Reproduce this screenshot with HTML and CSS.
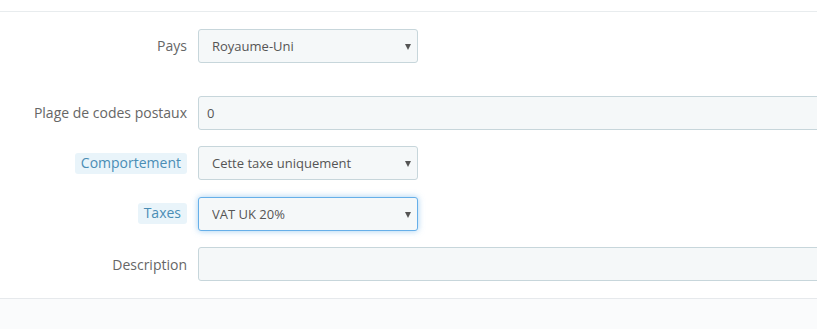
FILE: index.html
```html
<!DOCTYPE html>
<html lang="fr">
<head>
  <meta charset="UTF-8">
  <meta name="viewport" content="width=device-width, initial-scale=1.0">
  <title>Règle de taxe</title>
  <link rel="stylesheet" href="styles.css">
</head>
<body>
  <div class="panel-top"></div>
  <form class="tax-form">
    <div class="form-row">
      <label class="control-label" for="country">Pays</label>
      <div class="select-wrap">
        <select id="country" class="form-control">
          <option>Royaume-Uni</option>
        </select>
      </div>
    </div>
    <div class="form-row hidden-row"></div>
    <div class="form-row">
      <label class="control-label" for="zipcode">Plage de codes postaux</label>
      <div class="input-clip">
        <input id="zipcode" class="form-control wide" type="text" value="0">
      </div>
    </div>
    <div class="form-row">
      <label class="control-label" for="behavior"><span class="label-tooltip">Comportement</span></label>
      <div class="select-wrap">
        <select id="behavior" class="form-control">
          <option>Cette taxe uniquement</option>
        </select>
      </div>
    </div>
    <div class="form-row">
      <label class="control-label" for="tax"><span class="label-tooltip">Taxes</span></label>
      <div class="select-wrap">
        <select id="tax" class="form-control focused">
          <option>VAT UK 20%</option>
        </select>
      </div>
    </div>
    <div class="form-row">
      <label class="control-label" for="description">Description</label>
      <div class="input-clip">
        <input id="description" class="form-control wide" type="text" value="">
      </div>
    </div>
  </form>
  <div class="panel-footer"></div>
</body>
</html>
```

FILE: styles.css
```css
body {
  margin: 0;
  background-color: #fff;
  font-family: 'Open Sans', sans-serif;
  font-size: 14px;
  color: #555;
  overflow: hidden;
}
.panel-top {
  height: 11px;
  border-bottom: 1px solid #e8ecee;
}
.tax-form {
  display: flex;
  flex-direction: column;
  gap: 16.5px;
  padding: 16.5px 0 16.5px 0;
}
.form-row {
  display: grid;
  grid-template-columns: 187px 1fr;
  column-gap: 11px;
  align-items: center;
  height: 34px;
}
.form-row.hidden-row {
  height: 0;
}
.control-label {
  text-align: right;
  color: #666;
  font-size: 14px;
}
.label-tooltip {
  display: inline-block;
  padding: 1px 6px 2px;
  line-height: 18px;
  background-color: #e9f4fa;
  color: #4a8db5;
  border-radius: 3px;
}
.form-control {
  box-sizing: border-box;
  height: 34px;
  padding: 0 13px;
  font-family: 'Open Sans', sans-serif;
  font-size: 13px;
  color: #555;
  background-color: #f5f8f9;
  border: 1px solid #c7d6db;
  border-radius: 3px;
  outline: none;
}
.input-clip {
  overflow: hidden;
  height: 34px;
}
.form-control.wide {
  width: calc(100% + 6px);
  padding-left: 8px;
}
.select-wrap {
  position: relative;
  width: 220px;
}
.select-wrap select {
  width: 220px;
  appearance: none;
  -webkit-appearance: none;
}
.select-wrap::after {
  content: '';
  position: absolute;
  right: 7px;
  top: 15px;
  border-left: 3.5px solid transparent;
  border-right: 3.5px solid transparent;
  border-top: 6px solid #555;
  pointer-events: none;
}
.form-control.focused {
  border-color: #66afe9;
  box-shadow: 0 0 6px rgba(102, 175, 233, 0.6);
}
.panel-footer {
  height: 40px;
  background-color: #fafbfc;
  border-top: 1px solid #e6e9ec;
}
```
